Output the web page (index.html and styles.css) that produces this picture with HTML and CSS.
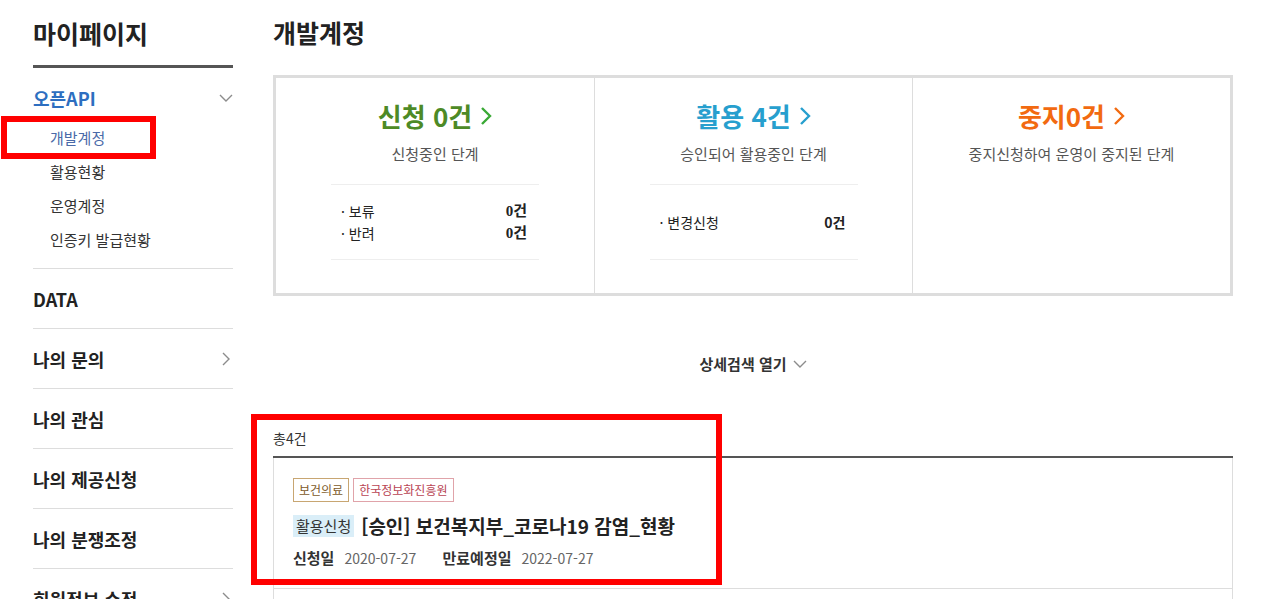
FILE: index.html
```html
<!DOCTYPE html>
<html lang="ko">
<head>
<meta charset="UTF-8">
<meta name="viewport" content="width=device-width, initial-scale=1.0">
<title>마이페이지 - 개발계정</title>
<link rel="stylesheet" href="styles.css">
</head>
<body>
<div class="wrap">
    <aside class="side">
        <h2 class="side-title">마이페이지</h2>
        <ul class="side-menu">
            <li class="side-item open">
                <div class="side-head">오픈API
                    <svg class="chev" width="14" height="14" viewBox="0 0 14 14"><path d="M1 4 L7 10 L13 4" fill="none" stroke="#8c8c8c" stroke-width="1.4"/></svg>
                </div>
                <ul class="side-sub">
                    <li class="on">개발계정</li>
                    <li>활용현황</li>
                    <li>운영계정</li>
                    <li>인증키 발급현황</li>
                </ul>
            </li>
            <li class="side-item"><div class="side-head">DATA</div></li>
            <li class="side-item">
                <div class="side-head">나의 문의
                    <svg class="chev" width="14" height="14" viewBox="0 0 14 14"><path d="M4 1 L10 7 L4 13" fill="none" stroke="#8c8c8c" stroke-width="1.4"/></svg>
                </div>
            </li>
            <li class="side-item"><div class="side-head">나의 관심</div></li>
            <li class="side-item"><div class="side-head">나의 제공신청</div></li>
            <li class="side-item"><div class="side-head">나의 분쟁조정</div></li>
            <li class="side-item">
                <div class="side-head">회원정보 수정
                    <svg class="chev" width="14" height="14" viewBox="0 0 14 14"><path d="M4 1 L10 7 L4 13" fill="none" stroke="#8c8c8c" stroke-width="1.4"/></svg>
                </div>
            </li>
        </ul>
    </aside>

    <main class="content">
        <h2 class="page-title">개발계정</h2>

        <div class="stats">
            <div class="stat stat-req">
                <p class="stat-title">신청 0건
                    <svg width="12" height="20" viewBox="0 0 12 20"><path d="M2 2 L10 10 L2 18" fill="none" stroke="#3aa935" stroke-width="2.4"/></svg>
                </p>
                <p class="stat-desc">신청중인 단계</p>
                <ul class="stat-list">
                    <li><span>· 보류</span><b class="num-serif">0건</b></li>
                    <li><span>· 반려</span><b class="num-serif">0건</b></li>
                </ul>
            </div>
            <div class="stat stat-use">
                <p class="stat-title">활용 4건
                    <svg width="12" height="20" viewBox="0 0 12 20"><path d="M2 2 L10 10 L2 18" fill="none" stroke="#279fce" stroke-width="2.4"/></svg>
                </p>
                <p class="stat-desc">승인되어 활용중인 단계</p>
                <ul class="stat-list">
                    <li><span>· 변경신청</span><b>0건</b></li>
                </ul>
            </div>
            <div class="stat stat-stop">
                <p class="stat-title">중지0건
                    <svg width="12" height="20" viewBox="0 0 12 20"><path d="M2 2 L10 10 L2 18" fill="none" stroke="#f26a10" stroke-width="2.4"/></svg>
                </p>
                <p class="stat-desc">중지신청하여 운영이 중지된 단계</p>
            </div>
        </div>

        <div class="search-row">
            <button class="search-toggle">상세검색 열기
                <svg width="14" height="14" viewBox="0 0 14 14"><path d="M1 4 L7 10 L13 4" fill="none" stroke="#8c8c8c" stroke-width="1.4"/></svg>
            </button>
        </div>

        <p class="total">총4건</p>

        <ul class="list">
            <li class="card">
                <div class="tags">
                    <span class="tag tag-cat">보건의료</span>
                    <span class="tag tag-org">한국정보화진흥원</span>
                </div>
                <div class="card-title">
                    <span class="badge">활용신청</span>
                    <strong>[승인] 보건복지부_코로나19 감염_현황</strong>
                </div>
                <div class="dates">
                    <span class="lbl">신청일</span><span class="val">2020-07-27</span>
                    <span class="lbl">만료예정일</span><span class="val">2022-07-27</span>
                </div>
            </li>
            <li class="card"></li>
        </ul>
    </main>
</div>

<!-- 캡처 표시용 빨간 박스 -->
<div class="mark mark-side"></div>
<div class="mark mark-list"></div>
</body>
</html>
```

FILE: styles.css
```css
* {
    box-sizing: border-box;
}

body {
    margin: 0;
    background: #fff;
    color: #222;
    font-family: "Noto Sans CJK KR", "Noto Sans", sans-serif;
}

ul {
    list-style: none;
    margin: 0;
    padding: 0;
}

p, h2 {
    margin: 0;
}

.wrap {
    display: flex;
    gap: 40px;
    padding-left: 33px;
}

/* 사이드 메뉴 */
.side {
    width: 200px;
    flex-shrink: 0;
}

.side-title {
    font-size: 25px;
    line-height: 30px;
    font-weight: 700;
    color: #222;
    padding: 18px 0 17px;
    border-bottom: 3px solid #555;
}

.side-item {
    border-bottom: 1px solid #ddd;
}

.side-head {
    display: flex;
    justify-content: space-between;
    align-items: center;
    height: 59px;
    font-size: 18px;
    font-weight: 700;
    color: #222;
}

.side-item.open .side-head {
    height: auto;
    padding-top: 19px;
    line-height: 22px;
    color: #2d6ec0;
}

.side-sub {
    padding: 12px 0 11px 17px;
}

.side-sub li {
    font-size: 15px;
    line-height: 34px;
    color: #333;
}

.side-sub li.on {
    color: #4a6aa8;
}

/* 본문 */
.content {
    width: 960px;
}

.page-title {
    font-size: 25px;
    line-height: 30px;
    font-weight: 700;
    padding-top: 17px;
    margin-bottom: 28px;
}

.stats {
    display: grid;
    grid-template-columns: repeat(3, 1fr);
    height: 221px;
    border: 3px solid #ddd;
}

.stat {
    padding-top: 23px;
    text-align: center;
}

.stat + .stat {
    border-left: 1px solid #ddd;
}

.stat-title {
    display: flex;
    justify-content: center;
    align-items: center;
    gap: 8px;
    font-size: 26px;
    line-height: 30px;
    font-weight: 700;
}

.stat-req .stat-title { color: #4d8a26; }
.stat-use .stat-title { color: #279fce; }
.stat-stop .stat-title { color: #f26a10; }

.stat-desc {
    margin-top: 13px;
    font-size: 15px;
    line-height: 20px;
    color: #555;
}

.stat-list {
    width: 208px;
    min-height: 76px;
    margin: 20px auto 0;
    padding: 0 12px 0 10px;
    border-top: 1px solid #eee;
    border-bottom: 1px solid #eee;
    display: flex;
    flex-direction: column;
    justify-content: center;
}

.stat-list li {
    display: flex;
    justify-content: space-between;
    font-size: 14px;
    line-height: 22px;
    color: #222;
}

.stat-list b {
    font-weight: 700;
}

.num-serif {
    font-family: "Liberation Serif", "Noto Sans CJK KR", serif;
    font-size: 15px;
}

.search-row {
    display: flex;
    justify-content: center;
    margin-top: 58px;
}

.search-toggle {
    display: flex;
    align-items: center;
    gap: 6px;
    background: none;
    border: none;
    padding: 0;
    font-family: inherit;
    font-size: 15px;
    line-height: 20px;
    font-weight: 700;
    color: #333;
    cursor: pointer;
}

.total {
    margin-top: 55px;
    margin-bottom: 9px;
    font-size: 14px;
    line-height: 18px;
    color: #333;
}

.list {
    border-top: 2px solid #555;
}

.card {
    border: 1px solid #ddd;
    border-top: none;
    padding: 20px 19px 19px;
    min-height: 40px;
}

.tags {
    display: flex;
    gap: 4px;
}

.tag {
    font-size: 12px;
    line-height: 22px;
    padding: 0 5px;
    border: 1px solid;
}

.tag-cat {
    border-color: #c8a672;
    color: #7d5a28;
}

.tag-org {
    border-color: #e0a3a9;
    color: #b94454;
}

.card-title {
    display: flex;
    align-items: center;
    gap: 7px;
    margin-top: 10px;
}

.badge {
    background: #daeef8;
    font-size: 15px;
    line-height: 22px;
    padding: 0 3px;
    color: #333;
}

.card-title strong {
    font-size: 19px;
    font-weight: 700;
    color: #222;
}

.dates {
    margin-top: 8px;
    font-size: 15px;
    line-height: 22px;
}

.dates .lbl {
    font-weight: 700;
    color: #333;
    margin-right: 10px;
}

.dates .val {
    font-size: 14px;
    color: #666;
    margin-right: 22px;
}

/* 빨간 표시 박스 */
.mark {
    position: absolute;
    border: 6px solid #f00;
}

.mark-side {
    left: 1px;
    top: 116px;
    width: 155px;
    height: 43px;
}

.mark-list {
    left: 251px;
    top: 414px;
    width: 471px;
    height: 171px;
}
```
